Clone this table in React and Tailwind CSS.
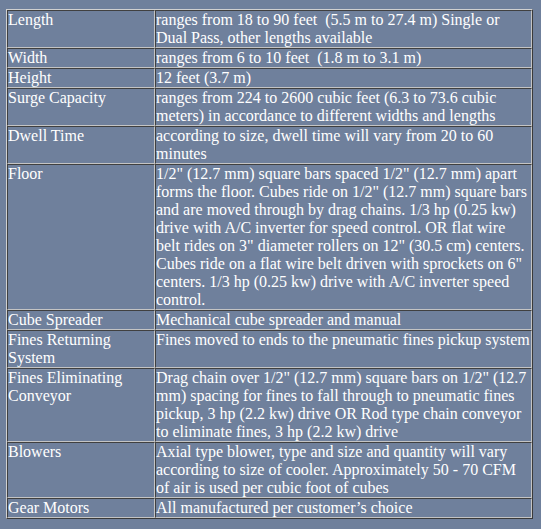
import React from 'react';

const rows = [
  ['Length', 'ranges from 18 to 90 feet \u00a0(5.5 m to 27.4 m) Single or Dual Pass, other lengths available'],
  ['Width', 'ranges from 6 to 10 feet \u00a0(1.8 m to 3.1 m)'],
  ['Height', '12 feet (3.7 m)'],
  ['Surge Capacity', 'ranges from 224 to 2600 cubic feet (6.3 to 73.6 cubic meters) in accordance to different widths and lengths'],
  ['Dwell Time', 'according to size, dwell time will vary from 20 to 60 minutes'],
  [
    'Floor',
    '1/2" (12.7 mm) square bars spaced 1/2" (12.7 mm) apart forms the floor. Cubes ride on 1/2" (12.7 mm) square bars and are moved through by drag chains. 1/3 hp (0.25 kw) drive with A/C inverter for speed control. OR flat wire belt rides on 3" diameter rollers on 12" (30.5 cm) centers. Cubes ride on a flat wire belt driven with sprockets on 6" centers. 1/3 hp (0.25 kw) drive with A/C inverter speed control.',
  ],
  ['Cube Spreader', 'Mechanical cube spreader and manual'],
  ['Fines Returning System', 'Fines moved to ends to the pneumatic fines pickup system'],
  [
    'Fines Eliminating Conveyor',
    'Drag chain over 1/2" (12.7 mm) square bars on 1/2" (12.7 mm) spacing for fines to fall through to pneumatic fines pickup, 3 hp (2.2 kw) drive OR Rod type chain conveyor to eliminate fines, 3 hp (2.2 kw) drive',
  ],
  ['Blowers', 'Axial type blower, type and size and quantity will vary according to size of cooler. Approximately 50 - 70 CFM of air is used per cubic foot of cubes'],
  ['Gear Motors', 'All manufactured per customer\u2019s choice'],
];

const cell = 'border border-t-[#404040] border-l-[#404040] border-b-[#c4c4c4] border-r-[#c4c4c4]';

export default function App() {
  return (
    <div className="min-h-screen bg-[#6f809c] pt-[9px] pl-[6px] font-['Liberation_Serif',serif] text-[16px] leading-[18px] text-white">
      <div className="grid w-[527px] grid-cols-[148px_377px] border border-t-[#d0d0d0] border-l-[#d0d0d0] border-b-[#3a3a3a] border-r-[#3a3a3a]">
        {rows.map(([label, value]) => (
          <React.Fragment key={label}>
            <div className={cell}>{label}</div>
            <div className={cell}>{value}</div>
          </React.Fragment>
        ))}
      </div>
    </div>
  );
}
